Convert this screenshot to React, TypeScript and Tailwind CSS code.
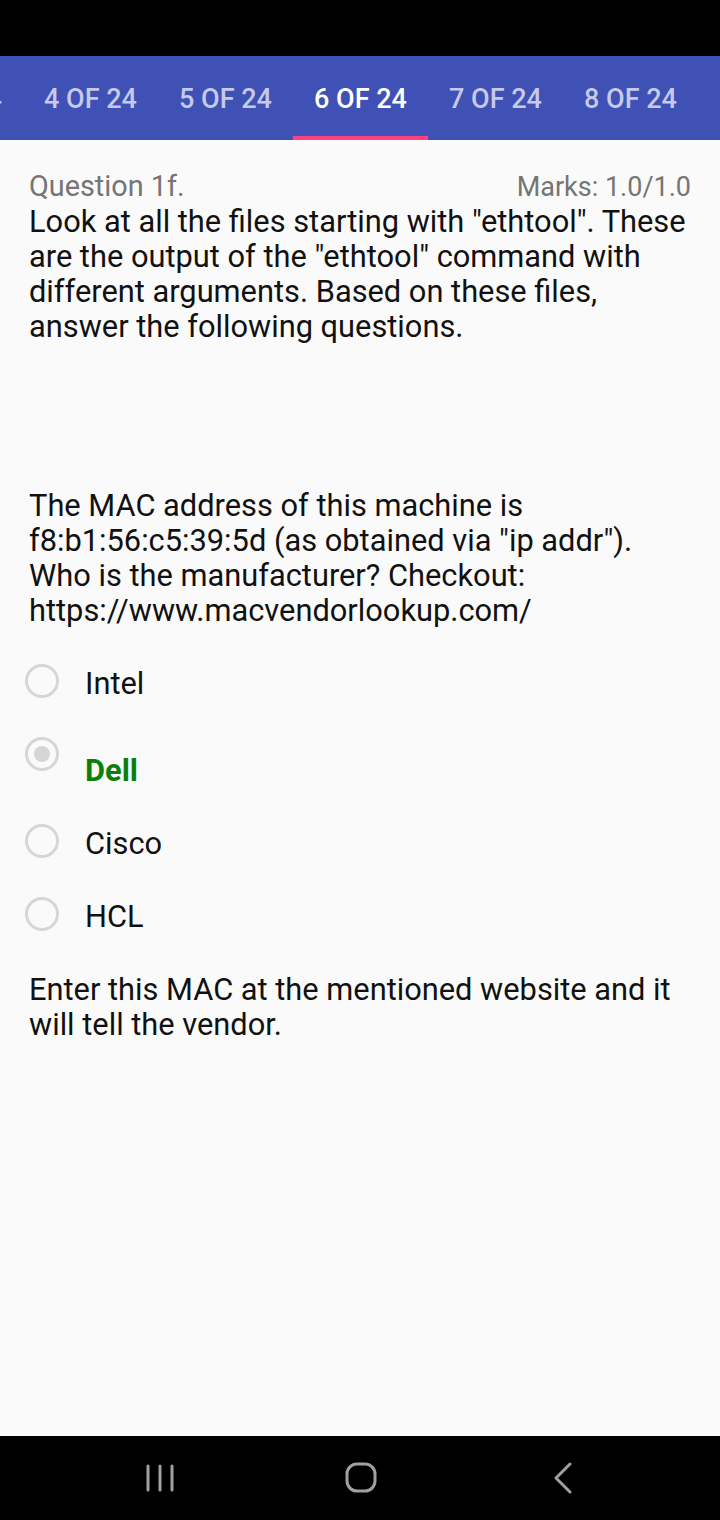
import React from 'react'

interface Option {
  label: string
  selected: boolean
}

const tabs = ['3 OF 24', '4 OF 24', '5 OF 24', '6 OF 24', '7 OF 24', '8 OF 24', '9 OF 24']

const options: Option[] = [
  { label: 'Intel', selected: false },
  { label: 'Dell', selected: true },
  { label: 'Cisco', selected: false },
  { label: 'HCL', selected: false },
]

function Radio({ selected }: { selected: boolean }) {
  return (
    <div className="w-[34px] h-[34px] rounded-full border-[3px] border-[#d6d6d6] flex items-center justify-center shrink-0">
      {selected && <div className="w-[16px] h-[16px] rounded-full bg-[#d6d6d6]" />}
    </div>
  )
}

export default function App() {
  return (
    <div
      className="w-[720px] h-[1520px] flex flex-col bg-[#fafafa] overflow-hidden"
      style={{ fontFamily: 'Roboto, "Noto Sans", sans-serif' }}
    >
      {/* Status bar */}
      <div className="h-[56px] bg-black shrink-0" />

      {/* Tabs */}
      <div className="h-[84px] bg-[#3f51b5] shrink-0 overflow-hidden">
        <div className="flex h-full -ml-[112px] w-max">
          {tabs.map((t) => {
            const active = t === '6 OF 24'
            return (
              <div key={t} className="relative w-[135px] h-full flex items-center justify-center pt-[2px]">
                <span className={`text-[27px] font-medium ${active ? 'text-white' : 'text-[#c5cae9]'}`}>{t}</span>
                {active && <div className="absolute left-0 right-0 bottom-0 h-[4px] bg-[#ff4081]" />}
              </div>
            )
          })}
        </div>
      </div>

      {/* Content */}
      <div className="flex-1 px-[29px] pt-[29px] text-[#111111]">
        <div className="flex justify-between items-baseline text-[#757575] leading-[34px]">
          <span className="text-[28.8px]">Question 1f.</span>
          <span className="text-[27px]">Marks: 1.0/1.0</span>
        </div>
        <p className="text-[30.8px] leading-[35px]">
          Look at all the files starting with "ethtool". These are the output of the "ethtool" command with
          different arguments. Based on these files, answer the following questions.
        </p>

        <p className="text-[30.8px] leading-[35px] mt-[144px]">
          The MAC address of this machine is f8:b1:56:c5:39:5d (as obtained via "ip addr"). Who is the
          manufacturer? Checkout: https://www.macvendorlookup.com/
        </p>

        <div className="mt-[36px] -ml-[4px] flex flex-col">
          {options.map((o) => (
            <div key={o.label} className={`flex items-start gap-[26px] ${o.selected ? 'h-[87px]' : 'h-[73px]'}`}>
              <Radio selected={o.selected} />
              <span
                className={`text-[30.8px] leading-[35px] ${
                  o.selected ? 'font-bold text-[#0a800a] mt-[16px]' : 'mt-[2px] text-[#111111]'
                }`}
              >
                {o.label}
              </span>
            </div>
          ))}
        </div>

        <p className="text-[30.8px] leading-[35px] mt-[2px]">
          Enter this MAC at the mentioned website and it will tell the vendor.
        </p>
      </div>

      {/* Navigation bar */}
      <div className="h-[84px] bg-black shrink-0 flex items-center">
        <svg className="ml-[145px]" width="30" height="30" viewBox="0 0 30 30" fill="none" stroke="#a0a0a0" strokeWidth="3" strokeLinecap="round">
          <path d="M3 3v24M15 3v24M27 3v24" />
        </svg>
        <svg className="ml-[170px]" width="32" height="32" viewBox="0 0 32 32" fill="none" stroke="#a0a0a0" strokeWidth="3">
          <rect x="2" y="2" width="28" height="27" rx="10" />
        </svg>
        <svg className="ml-[176px]" width="20" height="32" viewBox="0 0 20 32" fill="none" stroke="#a0a0a0" strokeWidth="3" strokeLinecap="round" strokeLinejoin="round">
          <path d="M17 2L3 16l14 14" />
        </svg>
      </div>
    </div>
  )
}
